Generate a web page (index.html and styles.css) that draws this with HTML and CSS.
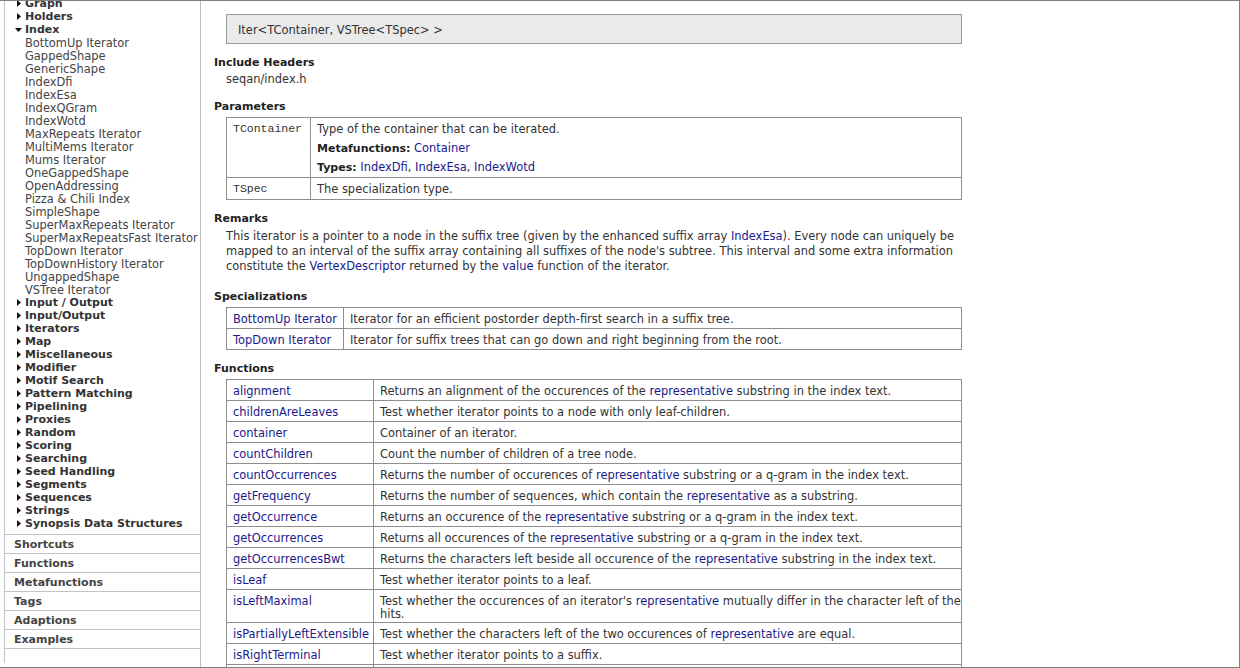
FILE: index.html
```html
<!DOCTYPE html>
<html>
<head>
<meta charset="utf-8">
<title>VSTree Iterator</title>
<link rel="stylesheet" href="styles.css">
</head>
<body>
<div class="frame">
  <nav class="sidebar">
    <div class="panel">
      <ul class="tree">
        <li class="grp"><span class="tw"><svg width="4" height="7" viewBox="0 0 4 7"><polygon points="0,0 4,3.5 0,7" fill="#111"/></svg></span>Graph</li>
        <li class="grp"><span class="tw"><svg width="4" height="7" viewBox="0 0 4 7"><polygon points="0,0 4,3.5 0,7" fill="#111"/></svg></span>Holders</li>
        <li class="grp"><span class="tw tw-open"><svg width="7" height="4" viewBox="0 0 7 4"><polygon points="0,0 7,0 3.5,4" fill="#111"/></svg></span>Index
          <ul class="kids">
            <li>BottomUp Iterator</li>
            <li>GappedShape</li>
            <li>GenericShape</li>
            <li>IndexDfi</li>
            <li>IndexEsa</li>
            <li>IndexQGram</li>
            <li>IndexWotd</li>
            <li>MaxRepeats Iterator</li>
            <li>MultiMems Iterator</li>
            <li>Mums Iterator</li>
            <li>OneGappedShape</li>
            <li>OpenAddressing</li>
            <li>Pizza &amp; Chili Index</li>
            <li>SimpleShape</li>
            <li>SuperMaxRepeats Iterator</li>
            <li>SuperMaxRepeatsFast Iterator</li>
            <li>TopDown Iterator</li>
            <li>TopDownHistory Iterator</li>
            <li>UngappedShape</li>
            <li>VSTree Iterator</li>
          </ul>
        </li>
        <li class="grp"><span class="tw"><svg width="4" height="7" viewBox="0 0 4 7"><polygon points="0,0 4,3.5 0,7" fill="#111"/></svg></span>Input / Output</li>
        <li class="grp"><span class="tw"><svg width="4" height="7" viewBox="0 0 4 7"><polygon points="0,0 4,3.5 0,7" fill="#111"/></svg></span>Input/Output</li>
        <li class="grp"><span class="tw"><svg width="4" height="7" viewBox="0 0 4 7"><polygon points="0,0 4,3.5 0,7" fill="#111"/></svg></span>Iterators</li>
        <li class="grp"><span class="tw"><svg width="4" height="7" viewBox="0 0 4 7"><polygon points="0,0 4,3.5 0,7" fill="#111"/></svg></span>Map</li>
        <li class="grp"><span class="tw"><svg width="4" height="7" viewBox="0 0 4 7"><polygon points="0,0 4,3.5 0,7" fill="#111"/></svg></span>Miscellaneous</li>
        <li class="grp"><span class="tw"><svg width="4" height="7" viewBox="0 0 4 7"><polygon points="0,0 4,3.5 0,7" fill="#111"/></svg></span>Modifier</li>
        <li class="grp"><span class="tw"><svg width="4" height="7" viewBox="0 0 4 7"><polygon points="0,0 4,3.5 0,7" fill="#111"/></svg></span>Motif Search</li>
        <li class="grp"><span class="tw"><svg width="4" height="7" viewBox="0 0 4 7"><polygon points="0,0 4,3.5 0,7" fill="#111"/></svg></span>Pattern Matching</li>
        <li class="grp"><span class="tw"><svg width="4" height="7" viewBox="0 0 4 7"><polygon points="0,0 4,3.5 0,7" fill="#111"/></svg></span>Pipelining</li>
        <li class="grp"><span class="tw"><svg width="4" height="7" viewBox="0 0 4 7"><polygon points="0,0 4,3.5 0,7" fill="#111"/></svg></span>Proxies</li>
        <li class="grp"><span class="tw"><svg width="4" height="7" viewBox="0 0 4 7"><polygon points="0,0 4,3.5 0,7" fill="#111"/></svg></span>Random</li>
        <li class="grp"><span class="tw"><svg width="4" height="7" viewBox="0 0 4 7"><polygon points="0,0 4,3.5 0,7" fill="#111"/></svg></span>Scoring</li>
        <li class="grp"><span class="tw"><svg width="4" height="7" viewBox="0 0 4 7"><polygon points="0,0 4,3.5 0,7" fill="#111"/></svg></span>Searching</li>
        <li class="grp"><span class="tw"><svg width="4" height="7" viewBox="0 0 4 7"><polygon points="0,0 4,3.5 0,7" fill="#111"/></svg></span>Seed Handling</li>
        <li class="grp"><span class="tw"><svg width="4" height="7" viewBox="0 0 4 7"><polygon points="0,0 4,3.5 0,7" fill="#111"/></svg></span>Segments</li>
        <li class="grp"><span class="tw"><svg width="4" height="7" viewBox="0 0 4 7"><polygon points="0,0 4,3.5 0,7" fill="#111"/></svg></span>Sequences</li>
        <li class="grp"><span class="tw"><svg width="4" height="7" viewBox="0 0 4 7"><polygon points="0,0 4,3.5 0,7" fill="#111"/></svg></span>Strings</li>
        <li class="grp"><span class="tw"><svg width="4" height="7" viewBox="0 0 4 7"><polygon points="0,0 4,3.5 0,7" fill="#111"/></svg></span>Synopsis Data Structures</li>
      </ul>
      <div class="sections">
        <div class="sec">Shortcuts</div>
        <div class="sec">Functions</div>
        <div class="sec">Metafunctions</div>
        <div class="sec">Tags</div>
        <div class="sec">Adaptions</div>
        <div class="sec">Examples</div>
      </div>
    </div>
  </nav>

  <main class="main">
    <div class="sig">Iter&lt;TContainer, VSTree&lt;TSpec&gt; &gt;</div>

    <h3 class="h">Include Headers</h3>
    <div class="dd">seqan/index.h</div>

    <h3 class="h h-after-text">Parameters</h3>
    <table class="tbl tbl-params">
      <colgroup><col class="c-param"><col></colgroup>
      <tr>
        <td class="mono">TContainer</td>
        <td>
          <div class="pline">Type of the container that can be iterated.</div>
          <div class="pline"><b class="lbl">Metafunctions:</b> <a>Container</a></div>
          <div class="pline"><b class="lbl">Types:</b> <a>IndexDfi</a>, <a>IndexEsa</a>, <a>IndexWotd</a></div>
        </td>
      </tr>
      <tr>
        <td class="mono">TSpec</td>
        <td>The specialization type.</td>
      </tr>
    </table>

    <h3 class="h">Remarks</h3>
    <p class="para">This iterator is a pointer to a node in the suffix tree (given by the enhanced suffix array <a>IndexEsa</a>). Every node can uniquely be<br>mapped to an interval of the suffix array containing all suffixes of the node's subtree. This interval and some extra information<br>constitute the <a>VertexDescriptor</a> returned by the <a>value</a> function of the iterator.</p>

    <h3 class="h h-after-para">Specializations</h3>
    <table class="tbl">
      <colgroup><col class="c-spec"><col></colgroup>
      <tr><td><a>BottomUp Iterator</a></td><td>Iterator for an efficient postorder depth-first search in a suffix tree.</td></tr>
      <tr><td><a>TopDown Iterator</a></td><td>Iterator for suffix trees that can go down and right beginning from the root.</td></tr>
    </table>

    <h3 class="h">Functions</h3>
    <table class="tbl">
      <colgroup><col class="c-func"><col></colgroup>
      <tr><td><a>alignment</a></td><td>Returns an alignment of the occurences of the <a>representative</a> substring in the index text.</td></tr>
      <tr><td><a>childrenAreLeaves</a></td><td>Test whether iterator points to a node with only leaf-children.</td></tr>
      <tr><td><a>container</a></td><td>Container of an iterator.</td></tr>
      <tr><td><a>countChildren</a></td><td>Count the number of children of a tree node.</td></tr>
      <tr><td><a>countOccurrences</a></td><td>Returns the number of occurences of <a>representative</a> substring or a q-gram in the index text.</td></tr>
      <tr><td><a>getFrequency</a></td><td>Returns the number of sequences, which contain the <a>representative</a> as a substring.</td></tr>
      <tr><td><a>getOccurrence</a></td><td>Returns an occurence of the <a>representative</a> substring or a q-gram in the index text.</td></tr>
      <tr><td><a>getOccurrences</a></td><td>Returns all occurences of the <a>representative</a> substring or a q-gram in the index text.</td></tr>
      <tr><td><a>getOccurrencesBwt</a></td><td>Returns the characters left beside all occurence of the <a>representative</a> substring in the index text.</td></tr>
      <tr><td><a>isLeaf</a></td><td>Test whether iterator points to a leaf.</td></tr>
      <tr class="tall"><td><a>isLeftMaximal</a></td><td>Test whether the occurences of an iterator's <a>representative</a> mutually differ in the character left of the<br>hits.</td></tr>
      <tr><td><a>isPartiallyLeftExtensible</a></td><td>Test whether the characters left of the two occurences of <a>representative</a> are equal.</td></tr>
      <tr><td><a>isRightTerminal</a></td><td>Test whether iterator points to a suffix.</td></tr>
      <tr class="empty"><td></td><td></td></tr>
    </table>
  </main>
</div>
</body>
</html>
```
FILE: styles.css
```css
html, body {
  margin: 0;
  padding: 0;
  background: #fff;
}
body {
  font-family: "DejaVu Sans", Verdana, sans-serif;
  font-size: 11.45px;
  color: #333;
}
a {
  color: #1a1a8a;
  text-decoration: none;
}

.frame {
  display: flex;
  height: 668px;
  box-sizing: border-box;
  border-top: 1px solid #808080;
  border-right: 1px solid #808080;
  border-bottom: 1px solid #808080;
  overflow: hidden;
}

/* sidebar */
.sidebar {
  width: 200px;
  flex: none;
  border-right: 1px solid #bdbdbd;
  overflow: hidden;
}
.panel {
  margin-left: 4px;
  border-left: 1px solid #c4c4c4;
  height: 100%;
}
.tree {
  list-style: none;
  margin: -4px 0 0;
  padding: 0;
  line-height: 13px;
}
.grp {
  font-weight: bold;
  font-size: 11px;
  color: #333;
  padding-left: 12px;
}
.tw {
  display: inline-block;
  width: 8px;
  vertical-align: top;
  height: 13px;
}
.tw svg {
  display: block;
  margin-top: 3px;
}
.tw-open svg {
  margin-top: 5px;
  margin-left: -2px;
}
.kids {
  list-style: none;
  margin: 0 0 -1px;
  padding: 1px 0 0 8px;
  font-weight: normal;
  font-size: 11.45px;
  color: #444;
}
.sections {
  margin-top: 4px;
}
.sec {
  border-top: 1px solid #c4c4c4;
  height: 18px;
  line-height: 20px;
  overflow: hidden;
  padding-left: 9px;
  font-weight: bold;
  font-size: 11px;
  color: #444;
}
.sec:last-child {
  border-bottom: 1px solid #c4c4c4;
}

/* main */
.main {
  flex: 1;
  min-width: 0;
  overflow: hidden;
  padding-top: 13px;
}
.sig {
  margin-left: 25px;
  width: 736px;
  box-sizing: border-box;
  border: 1px solid #999;
  background: #eaeaea;
  padding: 8px 11px 6px;
  line-height: 14px;
  color: #333;
}
.h {
  margin: 11px 0 0 13px;
  padding-top: 2px;
  font-size: 11px;
  line-height: 12px;
  font-weight: bold;
  color: #222;
}
.h-after-text {
  margin-top: 14px;
}
.h-after-para {
  margin-top: 15px;
}
.dd {
  margin: 2px 0 0 25px;
  padding-top: 2px;
  line-height: 12px;
}
.para {
  margin: 4px 0 0 25px;
  line-height: 15px;
  white-space: nowrap;
}

.tbl {
  margin: 4px 0 0 25px;
  width: 736px;
  border-collapse: collapse;
  table-layout: fixed;
  border: 1px solid #8e8e8e;
}
.tbl td {
  border: 1px solid #8e8e8e;
  padding: 5px 6px 2px;
  line-height: 13px;
  height: 13px;
  vertical-align: top;
  white-space: nowrap;
  overflow: hidden;
}
.tbl .tall td {
  padding-bottom: 1px;
}
.tbl-params td {
  padding: 5px 6px 3px;
}
.tbl-params td.mono {
  padding-top: 4px;
  padding-bottom: 4px;
}
.c-param { width: 84px; }
.c-spec { width: 117px; }
.c-func { width: 147px; }

.mono {
  font-family: "Liberation Mono", "Courier New", monospace;
  font-size: 11.5px;
  color: #333;
}
.pline + .pline {
  margin-top: 6px;
}
.lbl {
  font-size: 11px;
  color: #222;
}
```
